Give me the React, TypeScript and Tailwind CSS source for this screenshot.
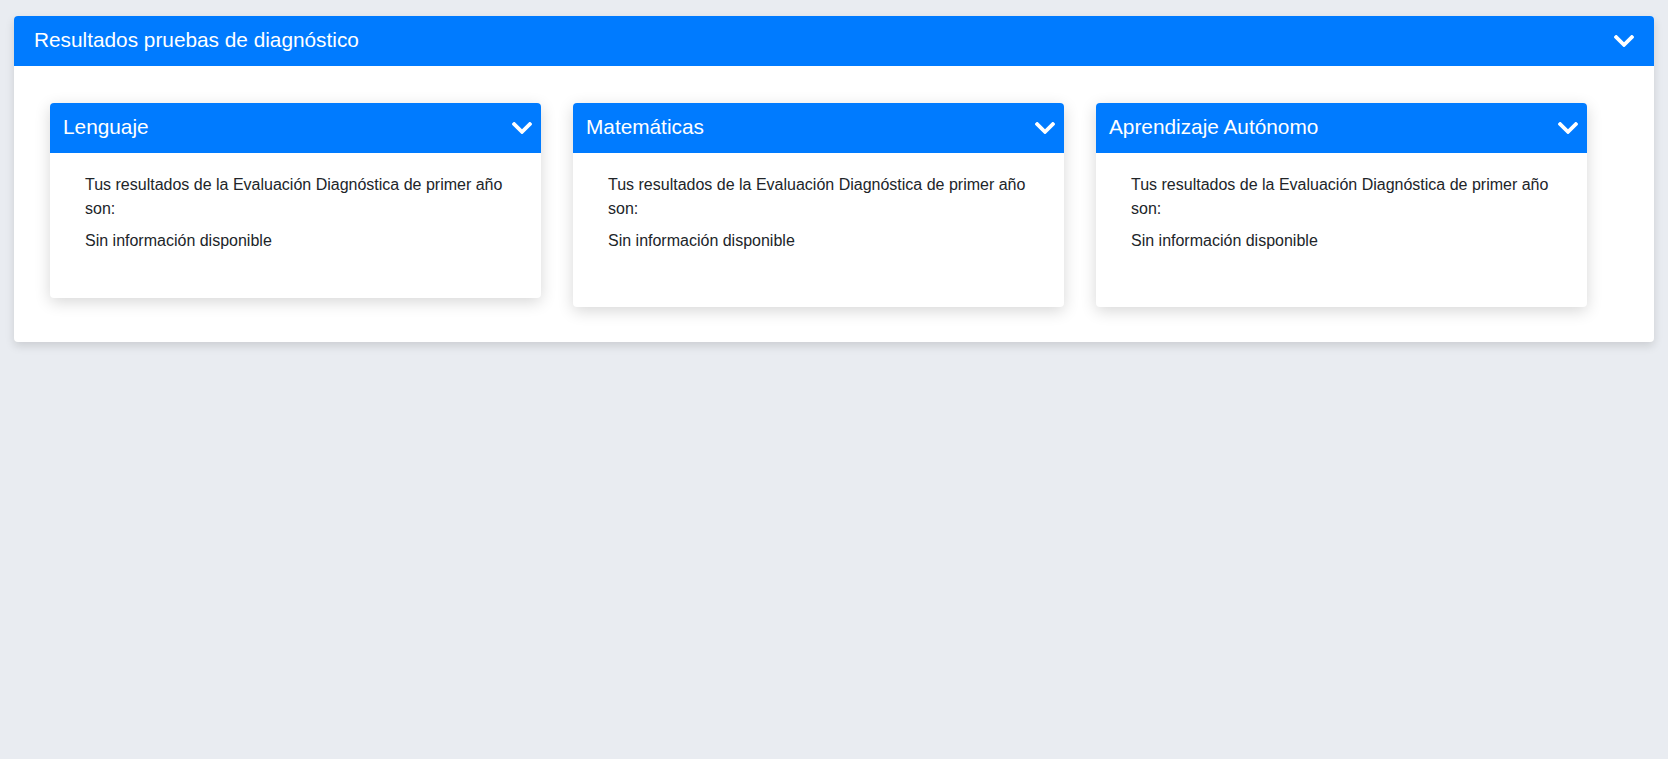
import React from 'react';

const subjects = [
  { name: 'Lenguaje', pb: 'pb-[45px]' },
  { name: 'Matemáticas', pb: 'pb-[54px]' },
  { name: 'Aprendizaje Autónomo', pb: 'pb-[54px]' },
];

function Chevron() {
  return (
    <svg width="20" height="12" viewBox="5 123 438 266" preserveAspectRatio="none" fill="currentColor" className="shrink-0">
      <path d="M207.029 381.476L12.686 187.132c-9.373-9.373-9.373-24.569 0-33.941l22.667-22.667c9.357-9.357 24.522-9.375 33.901-.04L224 284.505l154.745-154.021c9.379-9.335 24.544-9.317 33.901.04l22.667 22.667c9.373 9.373 9.373 24.569 0 33.941L240.971 381.476c-9.373 9.372-24.569 9.372-33.942 0z" />
    </svg>
  );
}

function SubjectCard({ name, pb }: { name: string; pb: string }) {
  return (
    <div className="w-[491px] bg-white rounded-[4px] shadow-[0_4px_16px_rgba(0,0,0,0.16)] self-start">
      {/* header */}
      <div className="h-[50px] bg-[#007bff] rounded-t-[4px] flex items-center justify-between pl-[13px] pr-[9px] text-white">
        <span className="text-[20.8px] leading-6 pb-[2px]">{name}</span>
        <Chevron />
      </div>
      {/* body */}
      <div className={`pl-[35px] pr-6 pt-5 ${pb} text-[16px] leading-6 text-[#212529]`}>
        <p>Tus resultados de la Evaluación Diagnóstica de primer año son:</p>
        <p className="mt-2">Sin información disponible</p>
      </div>
    </div>
  );
}

export default function App() {
  return (
    <div className="min-h-[759px] bg-[#e9ecf1] pt-4 px-[14px] font-['Liberation_Sans',Arial,sans-serif]">
      <div className="bg-white rounded-[4px] shadow-[0_4px_10px_rgba(0,0,0,0.13)]">
        {/* panel header */}
        <div className="h-[50px] bg-[#007bff] rounded-t-[4px] flex items-center justify-between pl-[20px] pr-5 text-white">
          <span className="text-[20.8px] leading-6 pb-[2px]">Resultados pruebas de diagnóstico</span>
          <Chevron />
        </div>

        <div className="flex gap-8 pl-9 pt-[37px] pb-[35px]">
          {subjects.map((s) => (
            <SubjectCard key={s.name} name={s.name} pb={s.pb} />
          ))}
        </div>
      </div>
    </div>
  );
}
